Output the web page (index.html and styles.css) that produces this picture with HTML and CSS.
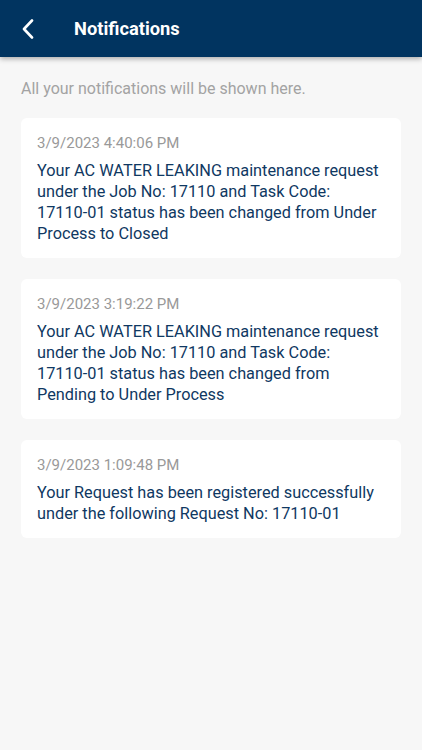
FILE: index.html
```html
<!DOCTYPE html>
<html lang="en">
<head>
    <meta charset="UTF-8">
    <meta name="viewport" content="width=device-width, initial-scale=1.0">
    <title>Notifications</title>
    <link rel="stylesheet" href="styles.css">
</head>
<body>
    <header class="topbar">
        <button class="back-btn" aria-label="Back">
            <svg width="14" height="20" viewBox="0 0 14 20">
                <path d="M11 1.5 L3 10 L11 18.5" fill="none" stroke="#fff" stroke-width="2.6" stroke-linecap="round" stroke-linejoin="round"/>
            </svg>
        </button>
        <h1 class="title">Notifications</h1>
    </header>

    <main class="content">
        <p class="intro">All your notifications will be shown here.</p>

        <div class="card">
            <div class="card-date">3/9/2023 4:40:06 PM</div>
            <div class="card-text">Your AC WATER LEAKING maintenance request under the Job No: 17110 and Task Code: 17110-&#8288;01 status has been changed from Under Process to Closed</div>
        </div>

        <div class="card">
            <div class="card-date">3/9/2023 3:19:22 PM</div>
            <div class="card-text">Your AC WATER LEAKING maintenance request under the Job No: 17110 and Task Code: 17110-&#8288;01 status has been changed from Pending to Under Process</div>
        </div>

        <div class="card">
            <div class="card-date">3/9/2023 1:09:48 PM</div>
            <div class="card-text">Your Request has been registered successfully under the following Request No: 17110-&#8288;01</div>
        </div>
    </main>
</body>
</html>
```

FILE: styles.css
```css
body {
    margin: 0;
    padding: 0;
    background: #f7f7f7;
    font-family: Roboto, "Noto Sans", sans-serif;
    min-height: 750px;
}

.topbar {
    height: 57px;
    background: #013460;
    display: flex;
    align-items: center;
    box-shadow: 0 2px 5px rgba(0, 0, 0, 0.3);
}

.back-btn {
    background: none;
    border: none;
    padding: 0;
    margin-left: 21px;
    width: 16px;
    height: 20px;
    display: flex;
    align-items: center;
}

.title {
    margin: 0 0 0 37px;
    color: #fff;
    font-size: 18.3px;
    font-weight: bold;
}

.content {
    padding: 0 21px;
}

.intro {
    margin: 0;
    padding: 22px 0 20px;
    font-size: 16px;
    color: #a3a3a3;
}

.card {
    background: #fff;
    border-radius: 6px;
    padding: 16px 16px 14px;
    margin-bottom: 21px;
}

.card-date {
    font-size: 15px;
    line-height: 18px;
    color: #999;
    margin-bottom: 8px;
}

.card-text {
    font-size: 16.3px;
    line-height: 21px;
    color: #0f3862;
}
```
